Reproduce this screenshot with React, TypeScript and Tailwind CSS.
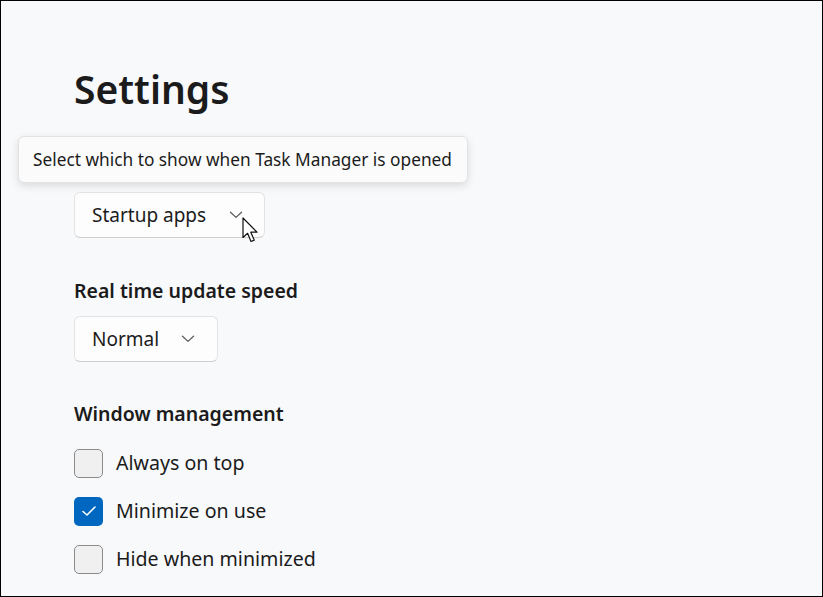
import React from 'react';

const FONT = { fontFamily: '"Segoe UI", "Noto Sans", "Open Sans", sans-serif' };

function Chevron() {
  return (
    <svg width="14" height="8" viewBox="0 0 14 8" fill="none" className="text-[#5f5f5f]">
      <path d="M1.5 1.2 L7 6.4 L12.5 1.2" stroke="currentColor" strokeWidth="1.3" strokeLinecap="round" strokeLinejoin="round" />
    </svg>
  );
}

function Dropdown({ label, width, gap }: { label: string; width: string; gap: string }) {
  return (
    <div className={`flex items-center ${width} h-[46px] pl-[17px] rounded-[6px] bg-[#fdfdfd] border border-[#e3e3e3] border-b-[#cfcfcf]`}>
      <span className="text-[19px] text-[#1b1b1b]">{label}</span>
      <span className={gap}><Chevron /></span>
    </div>
  );
}

function Check({ label, checked }: { label: string; checked?: boolean }) {
  return (
    <div className="flex items-center h-[30px] gap-[13px]">
      {checked ? (
        <div className="w-[29px] h-[29px] rounded-[5px] bg-[#0067c0] flex items-center justify-center">
          <svg width="16" height="12" viewBox="0 0 16 12" fill="none">
            <path d="M2 6.5 L6 10 L14 2" stroke="white" strokeWidth="1.6" strokeLinecap="round" strokeLinejoin="round" />
          </svg>
        </div>
      ) : (
        <div className="w-[29px] h-[29px] rounded-[5px] bg-[#f0f0f0] border border-[#8b8b8b]" />
      )}
      <span className="text-[19.6px] text-[#1b1b1b]">{label}</span>
    </div>
  );
}

export default function App() {
  return (
    <div style={FONT} className="w-[823px] h-[597px] bg-[#f8f9fb] border border-black relative overflow-hidden">
      <div className="pl-[73px] pt-[62px] flex flex-col">
        <h1 className="text-[39px] font-semibold text-[#1b1b1b] leading-[52px]">Settings</h1>

        <div className="mt-[77px]">
          <Dropdown label="Startup apps" width="w-[191px]" gap="ml-[23px]" />
        </div>

        <div className="mt-[40px] text-[19.5px] font-semibold text-[#1b1b1b] leading-[26px]">Real time update speed</div>
        <div className="mt-[12px]">
          <Dropdown label="Normal" width="w-[144px]" gap="ml-[22px]" />
        </div>

        <div className="mt-[39px] text-[19.5px] font-semibold text-[#1b1b1b] leading-[26px]">Window management</div>
        <div className="mt-[21px] flex flex-col gap-[18px]">
          <Check label="Always on top" />
          <Check label="Minimize on use" checked />
          <Check label="Hide when minimized" />
        </div>
      </div>

      {/* tooltip */}
      <div className="absolute left-[17px] top-[135px] w-[450px] h-[47px] rounded-[6px] bg-[#fbfbfb] border border-[#e2e2e2] shadow-[0_3px_8px_rgba(0,0,0,0.12)] flex items-center pl-[14px]">
        <span className="text-[17.3px] text-[#1b1b1b]">Select which to show when Task Manager is opened</span>
      </div>

      {/* mouse pointer */}
      <svg className="absolute left-[241px] top-[216px]" width="20" height="28" viewBox="0 0 20 28" fill="none">
        <path d="M1 1 L1 20.5 L5.6 16.3 L9 24.5 L12.2 23.1 L8.8 15.2 L15 15.2 Z" fill="white" stroke="#111" strokeWidth="1.2" strokeLinejoin="round" />
      </svg>
    </div>
  );
}
